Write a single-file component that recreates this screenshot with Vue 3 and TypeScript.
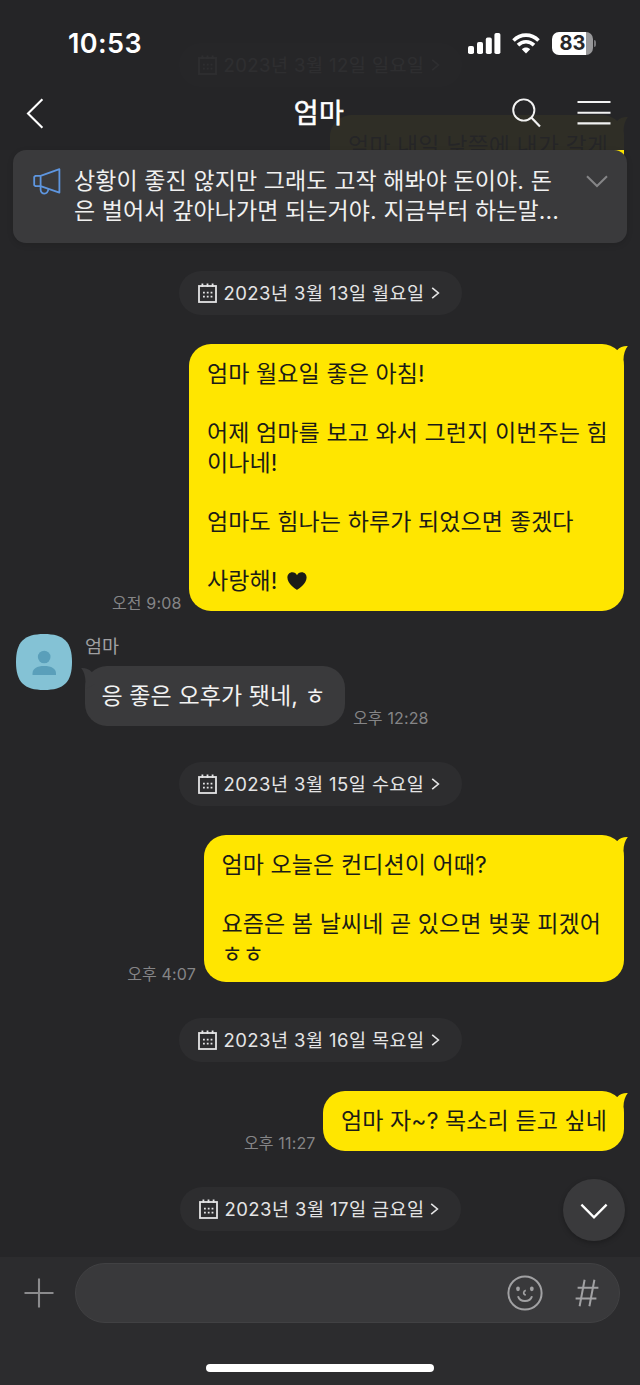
<script setup lang="ts">
interface DateItem {
  kind: 'date'
  id: string
  text: string
}
interface MessageItem {
  kind: 'message'
  id: string
  mine: boolean
  time: string
  lines: string[]
  heart?: boolean
}
type Item = DateItem | MessageItem

const items: Item[] = [
  { kind: 'date', id: 'd12', text: '2023년 3월 12일 일요일' },
  { kind: 'message', id: 'm12', mine: true, time: '', lines: ['엄마 내일 낮쯤에 내가 갈게'] },
  { kind: 'date', id: 'd13', text: '2023년 3월 13일 월요일' },
  {
    kind: 'message',
    id: 'm13',
    mine: true,
    time: '오전 9:08',
    heart: true,
    lines: [
      '엄마 월요일 좋은 아침!',
      '',
      '어제 엄마를 보고 와서 그런지 이번주는 힘',
      '이나네!',
      '',
      '엄마도 힘나는 하루가 되었으면 좋겠다',
      '',
      '사랑해!',
    ],
  },
  { kind: 'message', id: 'r13', mine: false, time: '오후 12:28', lines: ['응 좋은 오후가 됏네, ㅎ'] },
  { kind: 'date', id: 'd15', text: '2023년 3월 15일 수요일' },
  {
    kind: 'message',
    id: 'm15',
    mine: true,
    time: '오후 4:07',
    lines: ['엄마 오늘은 컨디션이 어때?', '', '요즘은 봄 날씨네 곧 있으면 벚꽃 피겠어', 'ㅎㅎ'],
  },
  { kind: 'date', id: 'd16', text: '2023년 3월 16일 목요일' },
  { kind: 'message', id: 'm16', mine: true, time: '오후 11:27', lines: ['엄마 자~? 목소리 듣고 싶네'] },
  { kind: 'date', id: 'd17', text: '2023년 3월 17일 금요일' },
]
</script>

<template>
  <div class="screen">
    <main class="chat">
      <template v-for="item in items" :key="item.id">
        <div v-if="item.kind === 'date'" class="date" :class="item.id">
          <svg class="cal" width="19" height="20" viewBox="0 0 19 20" fill="none" stroke="currentColor">
            <rect x="1" y="3" width="17" height="16" stroke-width="1.8" />
            <path d="M4.4 .6V4M9.5 .6V4M14.6 .6V4" stroke-width="1.8" />
            <path d="M5 9.6H14.4M5 13.6H14.4" stroke-width="1.8" stroke-dasharray="1.8 2" />
          </svg>
          <span class="date-text">{{ item.text }}</span>
          <svg class="more" width="9" height="12" viewBox="0 0 9 12" fill="none" stroke="currentColor" stroke-width="1.6">
            <path d="M1.2 .8L7.4 6L1.2 11.2" />
          </svg>
        </div>

        <div v-else class="row" :class="[item.id, item.mine ? 'mine' : 'theirs']">
          <template v-if="item.mine">
            <span class="time">{{ item.time }}</span>
            <div class="bubble">
              <div v-for="(line, i) in item.lines" :key="i" class="line">
                <span>{{ line }}</span>
                <svg v-if="item.heart && i === item.lines.length - 1" class="heart" width="20" height="18" viewBox="0 0 20 18">
                  <path d="M10 18C8.6 17 .4 12 .4 5.6C.4 2.4 2.6.3 5.3.3C7.5.3 9.2 1.4 10 3.2C10.8 1.4 12.5.3 14.7.3C17.4.3 19.6 2.4 19.6 5.6C19.6 12 11.4 17 10 18Z" fill="currentColor" />
                </svg>
              </div>
              <svg class="tail" width="14" height="24" viewBox="0 0 14 24">
                <path d="M0 4L3 6.2C5.8 3 9.6 1.8 13.8 2C11.2 5.2 9.5 10 9.5 16V23L0 18Z" fill="currentColor" />
              </svg>
            </div>
          </template>
          <template v-else>
            <svg class="avatar" width="56" height="56" viewBox="0 0 56 56">
              <path d="M28 0C48 0 56 8 56 28S48 56 28 56S0 48 0 28S8 0 28 0Z" fill="#84c2d5" />
              <circle cx="28.2" cy="23" r="6.3" fill="#5a9fba" />
              <path d="M16.5 41V39.5C16.5 34.5 21 32 28.2 32S40 34.5 40 39.5V41Z" fill="#5a9fba" />
            </svg>
            <div class="body">
              <span class="name">엄마</span>
              <div class="speech">
                <div class="bubble">
                  <div v-for="(line, i) in item.lines" :key="i" class="line">{{ line }}</div>
                  <svg class="tail" width="14" height="24" viewBox="0 0 14 24">
                    <path d="M14 4L11 6.2C8.2 3 4.4 1.8 .2 2C2.8 5.2 4.5 10 4.5 16V23L14 18Z" fill="currentColor" />
                  </svg>
                </div>
                <span class="time">{{ item.time }}</span>
              </div>
            </div>
          </template>
        </div>
      </template>
    </main>

    <header class="top">
      <div class="status">
        <span class="clock">10:53</span>
        <div class="indicators">
          <svg width="33" height="21" viewBox="0 0 33 21" fill="#fff">
            <rect x="0" y="13" width="6" height="8" rx="1.8" />
            <rect x="9" y="9" width="6" height="12" rx="1.8" />
            <rect x="17.8" y="4.6" width="6" height="16.4" rx="1.8" />
            <rect x="26.4" y="0" width="6" height="21" rx="1.8" />
          </svg>
          <svg class="wifi" width="28" height="21" viewBox="0 0 28 21" fill="none" stroke="#fff" stroke-width="3.6">
            <path d="M1.5 7.4C8.6.3 19.4.3 26.5 7.4" />
            <path d="M6 12.1C10.6 7.6 17.4 7.6 22 12.1" />
            <path d="M14 20.4L9.8 16.2C12.1 14 15.9 14 18.2 16.2Z" fill="#fff" stroke="none" />
          </svg>
          <div class="battery"><span>83</span></div>
          <i class="cap"></i>
        </div>
      </div>
      <nav class="nav">
        <svg width="18" height="31" viewBox="0 0 18 31" fill="none" stroke="#fff" stroke-width="2.1">
          <path d="M16.4 1.2L2 15.5L16.4 29.8" />
        </svg>
        <h1>엄마</h1>
        <div class="actions">
          <svg width="29" height="30" viewBox="0 0 29 30" fill="none" stroke="#f2f2f2" stroke-width="1.9">
            <circle cx="11.8" cy="12" r="10.6" />
            <path d="M19.3 19.6L28 28.4" stroke-width="2.2" />
          </svg>
          <svg width="34" height="26" viewBox="0 0 34 26" fill="none" stroke="#f2f2f2" stroke-width="2.1">
            <path d="M.5 2H33.5M.5 12.7H33.5M.5 23.4H33.5" />
          </svg>
        </div>
      </nav>
    </header>

    <section class="notice">
      <svg class="horn" width="28" height="27" viewBox="0 0 28 27" fill="none" stroke="#5e96e0" stroke-width="1.8" stroke-linejoin="round">
        <path d="M7.6 7.8L26.4 1.2V24.6L7.6 18.2Z" />
        <path d="M7.6 7.8H2.6L1.2 9V17L2.6 18.2H7.6" />
        <path d="M7.6 18.2V21.6C7.6 24 9.4 25.6 11.4 25.6S15 24 15.4 21" />
      </svg>
      <p>
        <span>상황이 좋진 않지만 그래도 고작 해봐야 돈이야. 돈</span>
        <span>은 벌어서 갚아나가면 되는거야. 지금부터 하는말...</span>
      </p>
      <svg class="fold" width="22" height="13" viewBox="0 0 22 13" fill="none" stroke="#858587" stroke-width="2">
        <path d="M1 1.2L11 11L21 1.2" />
      </svg>
    </section>

    <button class="jump" aria-label="아래로">
      <svg width="28" height="17" viewBox="0 0 28 17" fill="none" stroke="#fff" stroke-width="2.3">
        <path d="M1.4 1.6L14 14.4L26.6 1.6" />
      </svg>
    </button>

    <footer class="composer">
      <div class="tools">
        <svg width="30" height="30" viewBox="0 0 30 30" stroke="#8b8b8d" stroke-width="2.1">
          <path d="M15 .5V29.5M.5 15H29.5" />
        </svg>
        <div class="input">
          <svg width="36" height="36" viewBox="0 0 36 36" fill="none" stroke="#a1a1a3" stroke-width="2">
            <circle cx="18" cy="18" r="16.6" />
            <ellipse cx="11" cy="13.8" rx="1.9" ry="2.4" fill="#a1a1a3" stroke="none" />
            <ellipse cx="24.8" cy="13.8" rx="1.9" ry="2.4" fill="#a1a1a3" stroke="none" />
            <path d="M18.8 15.4C16 16.2 16 19.6 18.8 20" stroke-width="1.7" />
            <path d="M11 21.2C13 27.6 23 27.6 25 21.2" />
          </svg>
          <svg width="24" height="28" viewBox="0 0 24 28" fill="none" stroke="#a1a1a3" stroke-width="2">
            <path d="M9.6 .8L4.6 27.2M19.4 .8L14.4 27.2M2.6 8.7H23.4M.6 19.5H21.4" />
          </svg>
        </div>
      </div>
      <div class="home"></div>
    </footer>
  </div>
</template>

<style>
html,
body {
  margin: 0;
  background: #262628;
}
</style>

<style scoped>
.screen {
  position: relative;
  width: 640px;
  height: 1385px;
  overflow: hidden;
  background: #262628;
  color: #eee;
  font-family: Inter, "Noto Sans CJK KR", sans-serif;
}
.chat {
  display: flex;
  flex-direction: column;
  padding-top: 42.5px;
}
.date {
  display: flex;
  align-items: center;
  align-self: center;
  box-sizing: border-box;
  width: 283px;
  height: 44px;
  padding-left: 19px;
  border-radius: 22px;
  background: #2d2d2f;
  color: #e4e4e5;
}
.date-text {
  width: 202px;
  margin-left: 7px;
  font-size: 18.5px;
  letter-spacing: 0.45px;
  line-height: 26px;
  white-space: pre;
}
.more {
  margin-left: 5px;
}
.row {
  display: flex;
}
.mine {
  align-items: flex-end;
  justify-content: flex-end;
  gap: 7.5px;
  padding-right: 16.5px;
}
.bubble {
  position: relative;
  box-sizing: border-box;
  padding: 15.5px 18px;
  border-radius: 22px;
  font-size: 23px;
  letter-spacing: 0.1px;
  line-height: 29.5px;
}
.mine .bubble {
  background: #ffe600;
  color: #1b1b17;
}
.line {
  display: flex;
  align-items: center;
  box-sizing: border-box;
  height: 29.5px;
  padding-top: 2px;
  white-space: pre;
}
.heart {
  margin-left: 9px;
}
.tail {
  position: absolute;
  top: 0;
}
.mine .tail {
  right: -4.5px;
  color: #ffe600;
}
.theirs .tail {
  left: -4.5px;
  color: #3a3a3c;
}
.time {
  font-size: 16px;
  letter-spacing: 0.15px;
  line-height: 16px;
  color: #858587;
  white-space: pre;
}
.m12 {
  margin-top: 28.5px;
}
.m12 .bubble {
  width: 293.5px;
}
.d13 {
  margin-top: 95.5px;
}
.m13 {
  margin-top: 28.5px;
}
.m13 .bubble {
  width: 434.5px;
}
.r13 {
  margin-top: 23px;
  padding-left: 16px;
}
.body {
  display: flex;
  flex-direction: column;
  margin-left: 13px;
}
.name {
  height: 24px;
  font-size: 18.5px;
  line-height: 24px;
  color: #a0a0a2;
}
.speech {
  display: flex;
  align-items: flex-end;
  gap: 8.5px;
  margin-top: 8px;
}
.theirs .bubble {
  width: 259.5px;
  padding-left: 16.5px;
  background: #3a3a3c;
  color: #f2f2f2;
}
.d15 {
  margin-top: 36px;
}
.m15 {
  margin-top: 28.5px;
}
.m15 .bubble {
  width: 420px;
  padding-bottom: 14px;
}
.d16 {
  margin-top: 36px;
}
.m16 {
  margin-top: 28.5px;
}
.m16 .bubble {
  width: 300.5px;
}
.d17 {
  width: 281px;
  margin-top: 36px;
}
.d17 .date-text {
  width: 200px;
}
.top {
  position: absolute;
  inset: 0 0 auto;
  height: 150px;
  background: rgba(38, 38, 40, 0.955);
}
.status {
  display: flex;
  align-items: center;
  justify-content: space-between;
  height: 86px;
  padding: 0 44px 0 68px;
  box-sizing: border-box;
}
.clock {
  font-size: 27px;
  font-weight: 600;
  letter-spacing: 0.4px;
  color: #fff;
}
.indicators {
  display: flex;
  align-items: center;
}
.wifi {
  margin-left: 11px;
}
.battery {
  width: 41px;
  height: 23px;
  margin-left: 12px;
  border-radius: 7px;
  background: linear-gradient(90deg, #fff 34px, #98989a 34px);
  color: #262628;
  font-size: 20px;
  font-weight: 700;
  line-height: 23px;
  text-align: center;
}
.cap {
  width: 2px;
  height: 7px;
  margin-left: 1px;
  border-radius: 0 2px 2px 0;
  background: #77777a;
}
.nav {
  display: grid;
  grid-template-columns: 1fr auto 1fr;
  align-items: center;
  height: 54px;
  padding: 0 28px 0 26px;
}
h1 {
  margin: 0;
  padding-top: 2px;
  font-size: 27px;
  font-weight: 400;
  letter-spacing: 0.3px;
  line-height: 36px;
  color: #fff;
  -webkit-text-stroke: 0.6px #fff;
}
.actions {
  display: flex;
  align-items: center;
  justify-content: flex-end;
  gap: 36px;
  padding-right: 1px;
}
.notice {
  position: absolute;
  top: 149.5px;
  left: 13px;
  display: flex;
  box-sizing: border-box;
  width: 614px;
  height: 93.5px;
  padding: 16px 19px 0 20px;
  border-radius: 13px;
  background: #3a3a3c;
  box-shadow: 0 2px 6px rgba(0, 0, 0, 0.12);
}
.horn {
  margin-top: 2px;
}
.notice p {
  display: flex;
  flex: 1;
  flex-direction: column;
  margin: 1.5px 0 0 13px;
  font-size: 23px;
  letter-spacing: 0.1px;
  line-height: 29.5px;
  color: #f0f0f0;
  white-space: pre;
}
.fold {
  margin-top: 9px;
}
.jump {
  position: absolute;
  left: 563px;
  top: 1179px;
  display: grid;
  place-items: center;
  width: 62px;
  height: 62px;
  padding: 3px 0 0;
  border: 0;
  border-radius: 50%;
  background: #3a3a3c;
  box-shadow: 0 2px 5px rgba(0, 0, 0, 0.25);
}
.composer {
  position: absolute;
  inset: auto 0 0;
  height: 128px;
  background: #2c2c2e;
}
.tools {
  display: flex;
  align-items: center;
  padding: 6px 20px 0 24px;
}
.input {
  display: flex;
  flex: 1;
  align-items: center;
  justify-content: flex-end;
  gap: 32px;
  box-sizing: border-box;
  height: 60px;
  margin-left: 21px;
  padding-right: 20px;
  border: 1.5px solid #414143;
  border-radius: 30px;
  background: #39393b;
}
.home {
  width: 228px;
  height: 8px;
  margin: 41px auto 0;
  border-radius: 4px;
  background: #fff;
}
</style>
